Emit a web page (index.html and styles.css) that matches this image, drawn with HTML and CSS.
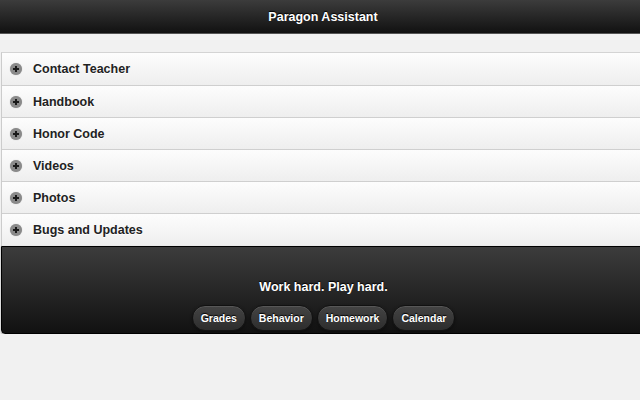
FILE: index.html
```html
<!DOCTYPE html>
<html lang="en">
<head>
<meta charset="utf-8">
<title>Paragon Assistant</title>
<link rel="stylesheet" href="styles.css">
</head>
<body>
<header class="bar">
  <h1 class="bar-title">Paragon Assistant</h1>
</header>

<main class="content">
  <ul class="collapsibles">
    <li class="row"><span class="plus"></span><span class="row-label">Contact Teacher</span></li>
    <li class="row"><span class="plus"></span><span class="row-label">Handbook</span></li>
    <li class="row"><span class="plus"></span><span class="row-label">Honor Code</span></li>
    <li class="row"><span class="plus"></span><span class="row-label">Videos</span></li>
    <li class="row"><span class="plus"></span><span class="row-label">Photos</span></li>
    <li class="row"><span class="plus"></span><span class="row-label">Bugs and Updates</span></li>
  </ul>

  <footer class="footer">
    <h3 class="motto">Work hard. Play hard.</h3>
    <nav class="links">
      <a class="pill" href="#">Grades</a>
      <a class="pill" href="#">Behavior</a>
      <a class="pill" href="#">Homework</a>
      <a class="pill" href="#">Calendar</a>
    </nav>
  </footer>
</main>
</body>
</html>
```
FILE: styles.css
```css
html, body {
  margin: 0;
  padding: 0;
}

body {
  background: #f1f1f1;
  font-family: "Liberation Sans", Arial, Helvetica, sans-serif;
  color: #222;
  overflow: hidden;
}

/* top toolbar */
.bar {
  height: 33px;
  background: linear-gradient(#3c3c3c, #111111);
  border-bottom: 1px solid #555;
  display: flex;
  align-items: center;
  justify-content: center;
  padding-left: 6px;
}

.bar-title {
  margin: 0;
  font-size: 12.5px;
  font-weight: bold;
  color: #fff;
  text-shadow: 0 -1px 1px #000;
}

.content {
  padding-top: 18px;
  margin-left: 1px;
  margin-right: -6px;
}

/* collapsible list */
.collapsibles {
  list-style: none;
  margin: 0;
  padding: 0;
  border-left: 1px solid #ccc;
  border-top: 1px solid #d4d4d4;
}

.row {
  height: 31px;
  display: flex;
  align-items: center;
  gap: 11px;
  padding-left: 8px;
  background: linear-gradient(#fdfdfd, #eeeeee);
  border-bottom: 1px solid #cfcfcf;
  font-size: 12.5px;
  font-weight: bold;
  color: #222;
  text-shadow: 0 1px 0 #fff;
}

.row:first-child {
  height: 32px;
}

.row:last-child {
  border-bottom: none;
  height: 32px;
}

.plus {
  position: relative;
  width: 12px;
  height: 12px;
  border-radius: 50%;
  background: #8a8a8a;
  box-shadow: 0 0 1px rgba(0, 0, 0, 0.3);
  flex: none;
}

.plus::before,
.plus::after {
  content: "";
  position: absolute;
  background: #1a1a1a;
}

.plus::before {
  left: 3px;
  top: 5px;
  width: 6px;
  height: 2px;
}

.plus::after {
  left: 5px;
  top: 3px;
  width: 2px;
  height: 6px;
}

/* dark footer */
.footer {
  background: linear-gradient(#3c3c3c, #111111);
  border: 1px solid #000;
  border-bottom-left-radius: 4px;
  box-shadow: 0 1px 2px rgba(0, 0, 0, 0.35);
  padding: 31px 0 2px;
  display: flex;
  flex-direction: column;
  align-items: center;
}

.motto {
  margin: 0;
  font-size: 12.5px;
  line-height: 18px;
  font-weight: bold;
  color: #fff;
  text-shadow: 0 -1px 1px #000;
}

.links {
  margin-top: 9px;
  display: flex;
  gap: 4px;
}

.pill {
  height: 24px;
  padding: 0 8px;
  display: flex;
  align-items: center;
  border: 1px solid #111;
  border-radius: 13px;
  background: linear-gradient(#444, #2d2d2d);
  box-shadow: 0 1px 3px rgba(0, 0, 0, 0.4), inset 0 1px 0 rgba(255, 255, 255, 0.1);
  font-size: 10.5px;
  font-weight: bold;
  color: #fff;
  text-decoration: none;
  text-shadow: 0 -1px 1px #000;
}
```
